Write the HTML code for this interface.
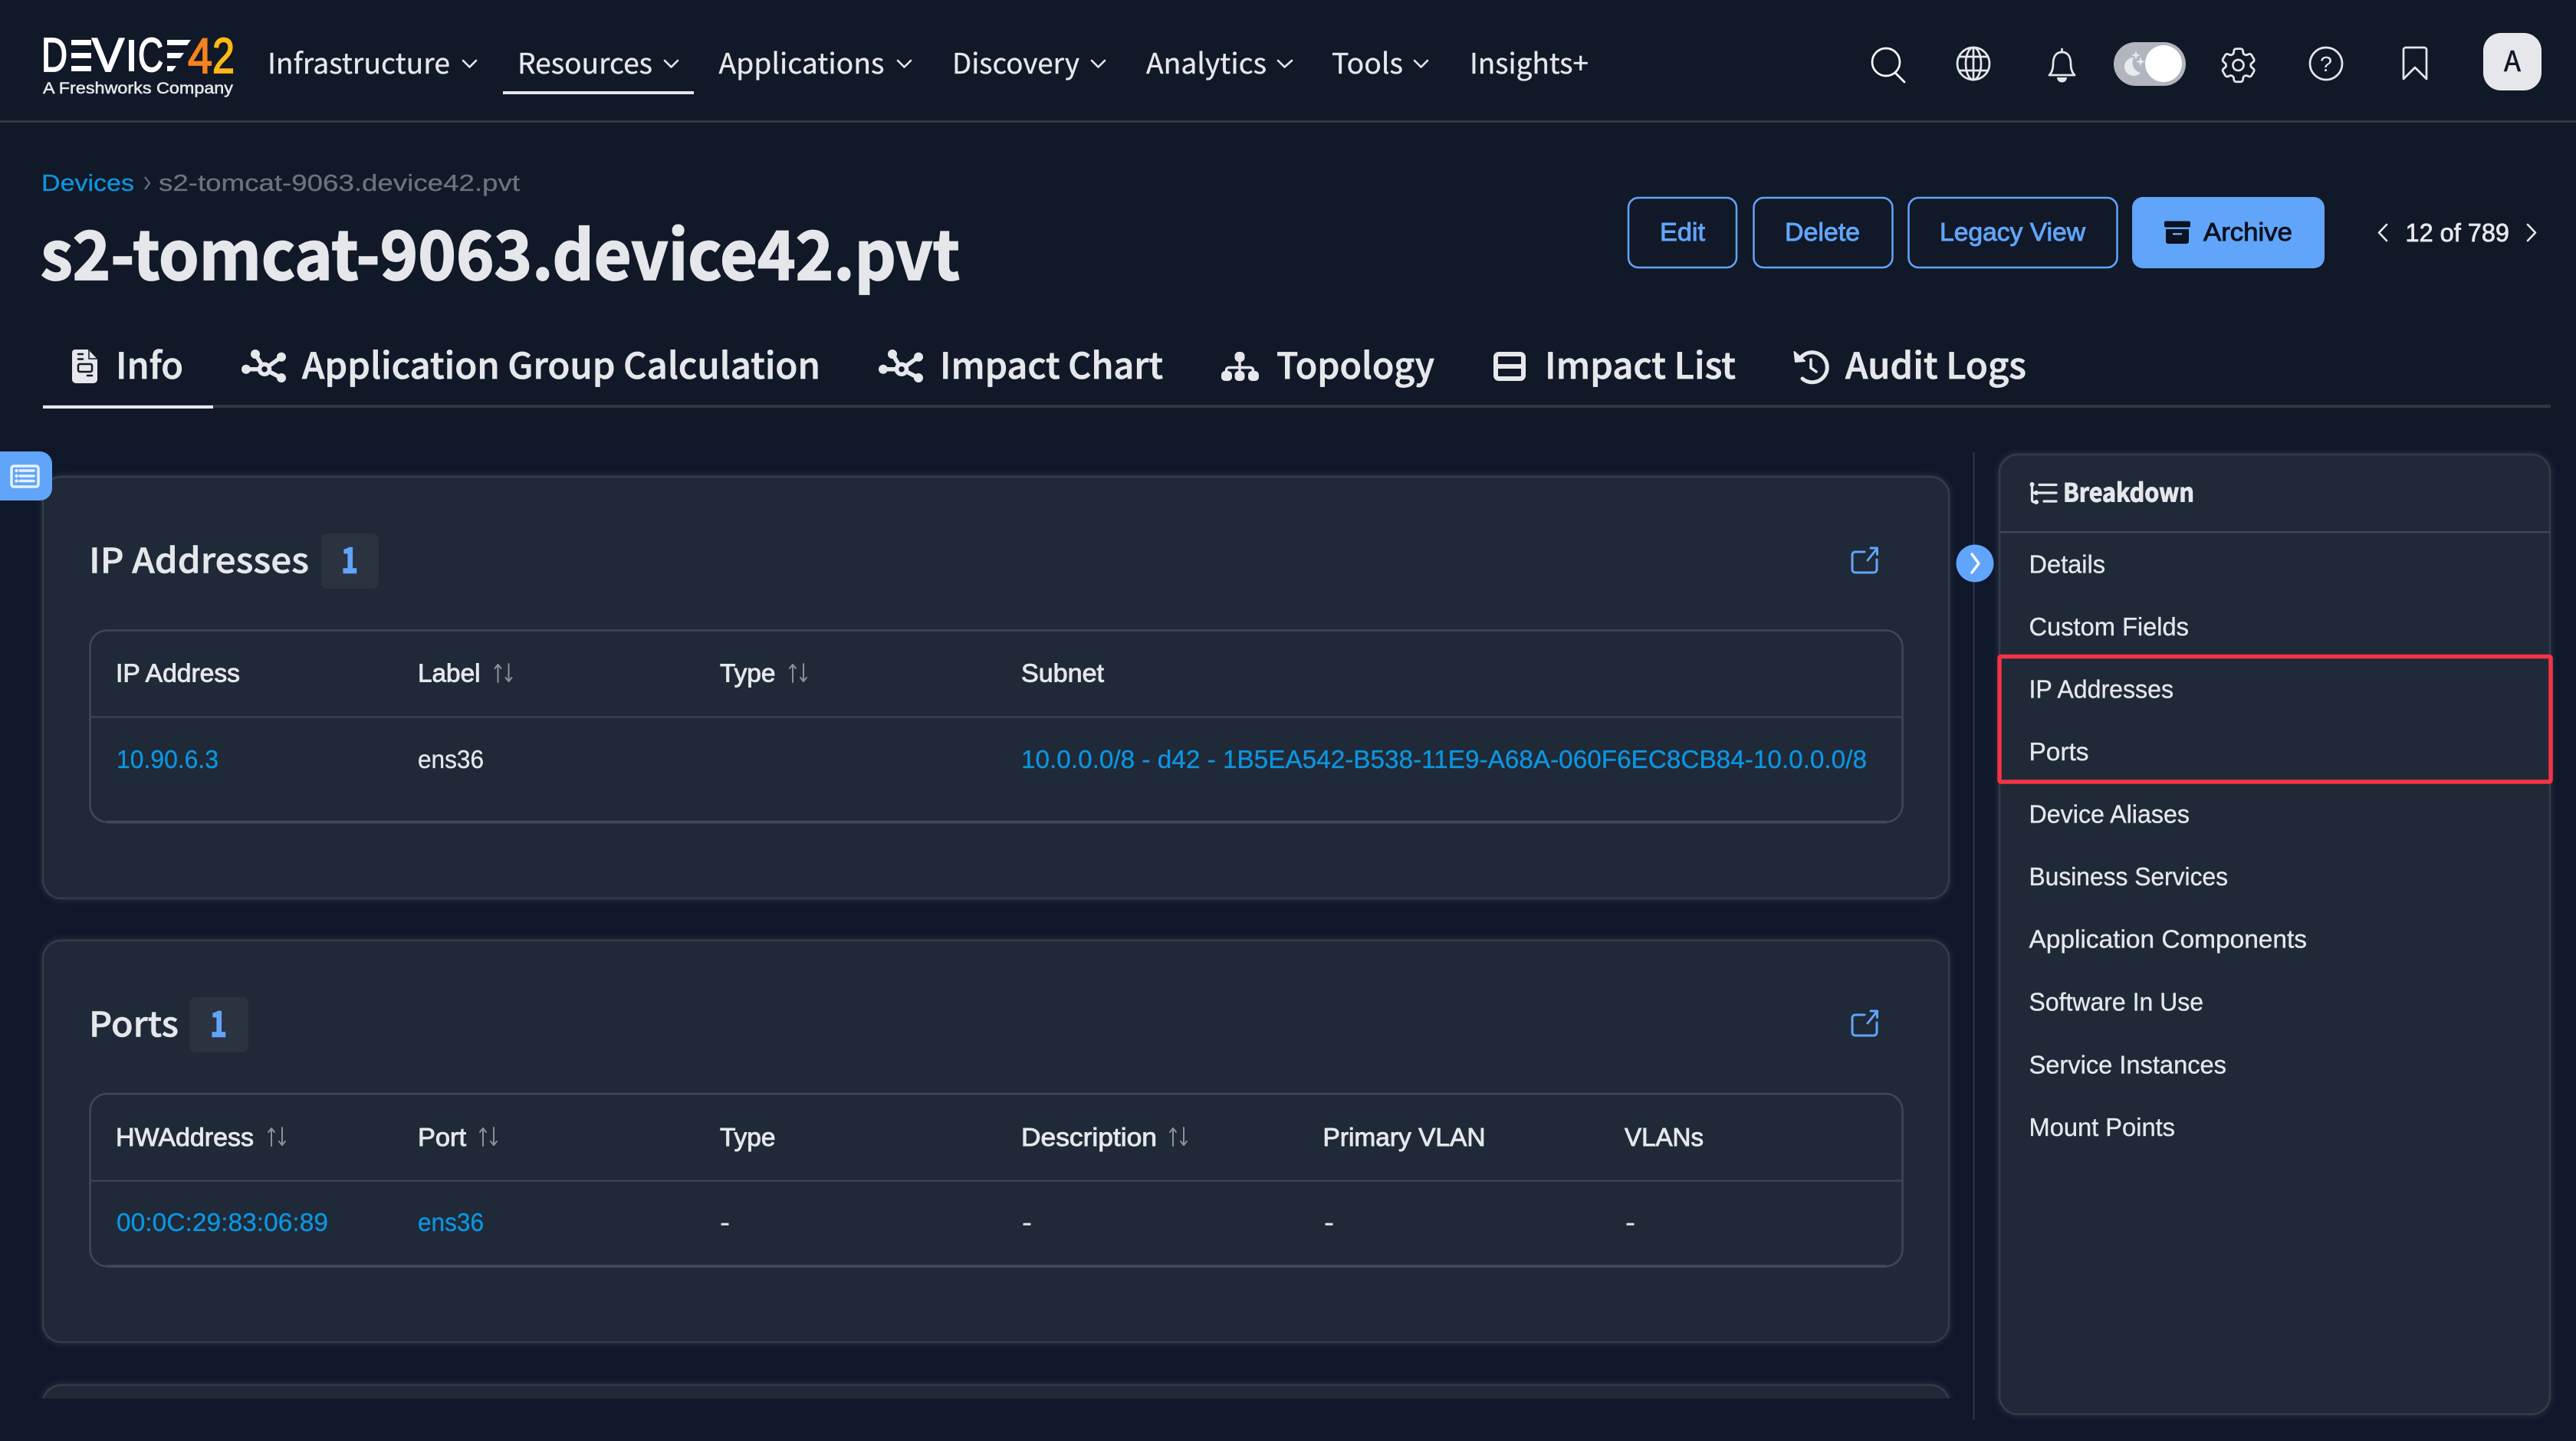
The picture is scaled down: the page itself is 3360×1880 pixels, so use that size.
<!DOCTYPE html>
<html lang="en"><head><meta charset="utf-8"><title>s2-tomcat-9063.device42.pvt</title>
<style>
html,body{margin:0;padding:0;width:3360px;height:1880px;overflow:hidden;background:#111827}
svg{display:block}
text{fill:#e5e7eb;white-space:pre}
.n{font-family:"Noto Sans CJK JP","Liberation Sans",sans-serif}
.l{font-family:"Liberation Sans","Noto Sans CJK JP",sans-serif}
.nav{font-size:37px;stroke:#e5e7eb;stroke-width:.35px}
.tab{font-size:47px;font-weight:500;stroke:#e5e7eb;stroke-width:.8px}
.th{font-size:33px;stroke:#e5e7eb;stroke-width:.9px}
.td{font-size:33px;stroke:#e5e7eb;stroke-width:.35px}
.a{fill:#0b95e0;stroke:#0b95e0;stroke-width:.35px}
.side{font-size:33px;stroke:#e5e7eb;stroke-width:.35px}
.btn{font-size:33px;fill:#60a5fa;stroke:#60a5fa;stroke-width:.9px}
.h{font-size:45px;font-weight:500;stroke:#e5e7eb;stroke-width:.6px}
.ic{fill:none;stroke:#e5e7eb;stroke-width:2.700;stroke-linecap:round;stroke-linejoin:round}
.ch{fill:none;stroke:#e5e7eb;stroke-width:2.600;stroke-linecap:round;stroke-linejoin:round}
.card{fill:#1f2937;stroke:#333c4b;stroke-width:2.500;filter:drop-shadow(0 0 5px rgba(255,255,255,.13))}
.tb{fill:none;stroke:#3f4856;stroke-width:2.500}
.sa{fill:none;stroke:#8b919b;stroke-width:2;stroke-linecap:round;stroke-linejoin:round}
.ext{fill:none;stroke:#60a5fa;stroke-width:3;stroke-linecap:round;stroke-linejoin:round}
</style></head>
<body>
<svg xmlns="http://www.w3.org/2000/svg" width="3360" height="1880" viewBox="0 0 3360 1880">
<defs>
<clipPath id="c3"><rect x="40" y="1790" width="2520" height="34.500"/></clipPath>
<linearGradient id="bg" x1="0" y1="0" x2="0" y2="1"><stop offset="0" stop-color="#111827"/><stop offset="1" stop-color="#0f172a"/></linearGradient>
<g id="sort"><path class="sa" d="M5 24V1M1 6l4-5 4 5M19 0v23M15 18l4 5 4-5"/></g>
</defs>
<rect width="3360" height="1880" fill="#111827"/>
<rect y="540" width="3360" height="70" fill="url(#bg)"/>
<rect y="610" width="3360" height="1270" fill="#0f172a"/>

<!-- header -->
<rect y="157" width="3360" height="3" fill="#2f3644"/>
<!-- logo -->
<g class="l" font-size="62" stroke-width="1.800">
<text x="54" y="93" textLength="34" lengthAdjust="spacingAndGlyphs" stroke="#fff" style="fill:#fff">D</text>
<rect x="93" y="52" width="26" height="7" fill="#fff"/><rect x="93" y="69" width="26" height="7" fill="#fff"/><rect x="93" y="86" width="26" height="7" fill="#fff"/>
<text x="120" y="93" textLength="42" lengthAdjust="spacingAndGlyphs" stroke="#fff" style="fill:#fff">V</text>
<rect x="168" y="52" width="7" height="41" fill="#fff"/>
<text x="180" y="93" textLength="33" lengthAdjust="spacingAndGlyphs" stroke="#fff" style="fill:#fff">C</text>
<path d="M218 52h31l-5 7h-26zM218 69h22l-5 7h-17zM218 86h12l-5 7h-7z" fill="#fff"/>
<text x="245" y="95" font-size="65" textLength="32" lengthAdjust="spacingAndGlyphs" stroke="#f58220" style="fill:#f58220">4</text>
<text x="277" y="95" font-size="65" textLength="29" lengthAdjust="spacingAndGlyphs" stroke="#fdb913" style="fill:#fdb913">2</text>
</g>
<text class="l" x="56" y="122" font-size="21" textLength="248" lengthAdjust="spacingAndGlyphs" stroke="#e5e7eb" stroke-width=".5">A Freshworks Company</text>

<!-- nav -->
<g class="n nav">
<text x="349" y="96" textLength="238" lengthAdjust="spacingAndGlyphs">Infrastructure</text>
<text x="675" y="96" textLength="176" lengthAdjust="spacingAndGlyphs">Resources</text>
<text x="937.500" y="96" textLength="216" lengthAdjust="spacingAndGlyphs">Applications</text>
<text x="1242" y="96" textLength="166" lengthAdjust="spacingAndGlyphs">Discovery</text>
<text x="1495" y="96" textLength="157" lengthAdjust="spacingAndGlyphs">Analytics</text>
<text x="1737" y="96" textLength="93" lengthAdjust="spacingAndGlyphs">Tools</text>
<text x="1917" y="96" textLength="155" lengthAdjust="spacingAndGlyphs">Insights+</text>
</g>
<path class="ch" d="M604 79l8.500 8.500L621 79M867 79l8.500 8.500L884 79M1171 79l8.500 8.500L1188 79M1424 79l8.500 8.500L1441 79M1667 79l8.500 8.500L1685 79M1845 79l8.500 8.500L1862 79"/>
<rect x="656" y="119" width="249" height="4" fill="#e5e7eb"/>

<!-- top right icons -->
<g class="ic">
<circle cx="2460" cy="81" r="18" stroke="#fff"/><path d="M2472 95l12 12" stroke="#fff"/>
<circle cx="2574" cy="83" r="21"/><ellipse cx="2574" cy="83" rx="10" ry="21"/><path d="M2574 62v42M2556 74h36M2556 92h36"/>
<path d="M2673 98c4-4 5-9 5-15c0-9 4-15 11.500-15s11.500 6 11.500 15c0 6 1 11 5 15z"/><path d="M2689.500 64v4"/>
<path transform="translate(2891 56.500) scale(2.390)" stroke-width="1.150" d="M9.594 3.940c.09-.542.56-.94 1.110-.94h2.593c.55 0 1.020.398 1.110.94l.213 1.281c.063.374.313.686.645.87.074.04.147.083.22.127.325.196.72.257 1.075.124l1.217-.456a1.125 1.125 0 011.370.49l1.296 2.247a1.125 1.125 0 01-.26 1.431l-1.003.827c-.293.24-.438.613-.431.992a6.759 6.759 0 010 .255c-.007.378.138.75.43.99l1.005.828c.424.35.534.954.26 1.430l-1.298 2.247a1.125 1.125 0 01-1.369.491l-1.217-.456c-.355-.133-.75-.072-1.076.124a6.570 6.570 0 01-.22.128c-.331.183-.581.495-.644.869l-.213 1.280c-.09.543-.56.941-1.110.941h-2.594c-.55 0-1.020-.398-1.110-.94l-.213-1.281c-.062-.374-.312-.686-.644-.87a6.520 6.520 0 01-.22-.127c-.325-.196-.72-.257-1.076-.124l-1.217.456a1.125 1.125 0 01-1.369-.49l-1.297-2.247a1.125 1.125 0 01.26-1.431l1.004-.827c.292-.24.437-.613.43-.992a6.932 6.932 0 010-.255c.007-.378-.138-.75-.43-.99l-1.004-.828a1.125 1.125 0 01-.26-1.430l1.297-2.247a1.125 1.125 0 011.370-.491l1.216.456c.356.133.751.072 1.076-.124.072-.044.146-.087.22-.128.332-.183.582-.495.644-.869l.214-1.281z"/>
<circle cx="2919.500" cy="85" r="7"/>
<circle cx="3034" cy="83" r="21"/>
<path d="M3135 103V65a3 3 0 0 1 3-3h24a3 3 0 0 1 3 3v38l-15-15z"/>
</g>
<path d="M2683 101h13a6.500 6.500 0 0 1-13 0z" fill="#e5e7eb"/>
<text class="l" x="3026" y="93" font-size="28" textLength="16" lengthAdjust="spacingAndGlyphs">?</text>
<rect x="2757" y="55" width="94" height="57" rx="28.500" fill="#b1b6be"/>
<path d="M2783 75a12 12 0 1 0 9 20a14 14 0 0 1-9-20z" fill="#e8eaee"/>
<path d="M2786 66l1.500 4.500 4.500 1.500-4.500 1.500-1.500 4.500-1.500-4.500-4.500-1.500 4.500-1.500zM2792 74l1.500 5 4.500 1.500-4.500 1.500-1.500 5-1.500-5-4.500-1.500 4.500-1.500z" fill="#e8eaee"/>
<circle cx="2822" cy="83" r="24" fill="#fff"/>
<rect x="3239" y="43" width="76" height="75" rx="23" fill="#e5e7eb"/>
<text class="n" x="3266" y="93" font-size="37" textLength="22" lengthAdjust="spacingAndGlyphs" stroke="#111827" stroke-width=".6" style="fill:#111827">A</text>

<!-- breadcrumb + title -->
<text class="l" x="54" y="249" font-size="31" textLength="121" lengthAdjust="spacingAndGlyphs" stroke="#0b95e0" stroke-width=".3" style="fill:#0b95e0">Devices</text>
<path d="M189 231l6 8-6 8" fill="none" stroke="#6b7280" stroke-width="2.200"/>
<text class="l" x="207" y="249" font-size="31" textLength="471" lengthAdjust="spacingAndGlyphs" stroke="#6b7280" stroke-width=".3" style="fill:#6b7280">s2-tomcat-9063.device42.pvt</text>
<text class="n" x="53" y="365" font-size="88" font-weight="700" textLength="1199" lengthAdjust="spacingAndGlyphs" stroke="#e5e7eb" stroke-width="1.800">s2-tomcat-9063.device42.pvt</text>

<!-- buttons -->
<g fill="none" stroke="#60a5fa" stroke-width="2.500">
<rect x="2124" y="258" width="141" height="91" rx="13"/>
<rect x="2287.500" y="258" width="181" height="91" rx="13"/>
<rect x="2489.500" y="258" width="272" height="91" rx="13"/>
</g>
<g class="l">
<text class="btn" x="2165" y="314" textLength="59" lengthAdjust="spacingAndGlyphs">Edit</text>
<text class="btn" x="2328" y="314" textLength="98" lengthAdjust="spacingAndGlyphs">Delete</text>
<text class="btn" x="2530" y="314" textLength="190" lengthAdjust="spacingAndGlyphs">Legacy View</text>
</g>
<rect x="2781" y="257" width="251" height="93" rx="14" fill="#60a5fa"/>
<path d="M2825 288.500h30a2 2 0 0 1 2 2v4a2 2 0 0 1-2 2h-30a2 2 0 0 1-2-2v-4a2 2 0 0 1 2-2zM2825 299h30v16a3 3 0 0 1-3 3h-24a3 3 0 0 1-3-3zM2834 304v2.500h12V304z" fill="#0b1220" fill-rule="evenodd"/>
<text class="l" x="2874" y="314" font-size="33" textLength="116" lengthAdjust="spacingAndGlyphs" stroke="#0b1220" stroke-width=".9" style="fill:#0b1220">Archive</text>
<path class="ch" d="M3113 293l-10 10.500 10 10.500M3297 293l10 10.500-10 10.500"/>
<text class="l" x="3137.500" y="315" font-size="33" textLength="135.500" lengthAdjust="spacingAndGlyphs" stroke="#e5e7eb" stroke-width=".8">12 of 789</text>

<!-- tabs -->
<rect x="56" y="528" width="3271" height="4" fill="#2f3644"/>
<rect x="56" y="529" width="222" height="4" fill="#e5e7eb"/>
<g class="n tab">
<text x="151" y="494" textLength="88" lengthAdjust="spacingAndGlyphs">Info</text>
<text x="394" y="494" textLength="676" lengthAdjust="spacingAndGlyphs">Application Group Calculation</text>
<text x="1226" y="494" textLength="291" lengthAdjust="spacingAndGlyphs">Impact Chart</text>
<text x="1665" y="494" textLength="206" lengthAdjust="spacingAndGlyphs">Topology</text>
<text x="2015" y="494" textLength="249" lengthAdjust="spacingAndGlyphs">Impact List</text>
<text x="2407" y="494" textLength="236" lengthAdjust="spacingAndGlyphs">Audit Logs</text>
</g>
<!-- info doc icon -->
<path d="M98 456h17l12 12.500V495a5 5 0 0 1-5 5H99a5 5 0 0 1-5-5v-35a4 4 0 0 1 4-4z" fill="#e5e7eb"/>
<path d="M102 462h6M102 468.500h6M114 490h6" stroke="#111827" stroke-width="2.500" stroke-linecap="round"/>
<rect x="102" y="475" width="18" height="10" rx="2" fill="none" stroke="#111827" stroke-width="2.500"/>
<path d="M116 456v12h11" fill="none" stroke="#111827" stroke-width="1.500"/>
<!-- app group icons -->
<g>
<path d="M333 462l12 19.700M321 481.700h24M367 465.700l-22 16M367 493l-22-11.300" stroke="#e5e7eb" stroke-width="5.500" fill="none"/>
<circle cx="333" cy="462" r="6" fill="#e5e7eb"/><circle cx="321" cy="481.700" r="6" fill="#e5e7eb"/><circle cx="367" cy="465.700" r="6" fill="#e5e7eb"/><circle cx="367" cy="493" r="6" fill="#e5e7eb"/>
<circle cx="345" cy="481.700" r="6.500" fill="#111827" stroke="#e5e7eb" stroke-width="5.500"/>
</g>
<g transform="translate(831 0)">
<path d="M333 462l12 19.700M321 481.700h24M367 465.700l-22 16M367 493l-22-11.300" stroke="#e5e7eb" stroke-width="5.500" fill="none"/>
<circle cx="333" cy="462" r="6" fill="#e5e7eb"/><circle cx="321" cy="481.700" r="6" fill="#e5e7eb"/><circle cx="367" cy="465.700" r="6" fill="#e5e7eb"/><circle cx="367" cy="493" r="6" fill="#e5e7eb"/>
<circle cx="345" cy="481.700" r="6.500" fill="#111827" stroke="#e5e7eb" stroke-width="5.500"/>
</g>
<!-- topology -->
<path d="M1617 470v10M1599.500 486v-3a3.500 3.500 0 0 1 3.500-3.500h28a3.500 3.500 0 0 1 3.500 3.500v3M1617 480v6" stroke="#e5e7eb" stroke-width="3.500" fill="none"/>
<rect x="1610.500" y="459" width="13" height="13" rx="5.500" fill="#e5e7eb"/>
<rect x="1593" y="484" width="14" height="13" rx="5" fill="#e5e7eb"/><rect x="1610.500" y="484" width="13" height="13" rx="5" fill="#e5e7eb"/><rect x="1628" y="484" width="14" height="13" rx="5" fill="#e5e7eb"/>
<!-- impact list -->
<rect x="1951" y="462" width="36" height="32" rx="4" fill="none" stroke="#e5e7eb" stroke-width="6"/>
<path d="M1950 478h38" stroke="#e5e7eb" stroke-width="6"/>
<!-- audit -->
<path d="M2349 466.500A19.500 19.500 0 1 1 2351 494" fill="none" stroke="#e5e7eb" stroke-width="5" stroke-linecap="round"/>
<path d="M2340.500 459l1.500 13 12-1z" fill="#e5e7eb" stroke="#e5e7eb" stroke-width="2" stroke-linejoin="round"/>
<path d="M2362 469v11l7 5" fill="none" stroke="#e5e7eb" stroke-width="3.500" stroke-linecap="round"/>

<!-- divider -->
<rect x="2573.500" y="590" width="2" height="1263" fill="#2f3644"/>

<!-- card 1 -->
<rect class="card" x="56" y="622" width="2486" height="550" rx="24"/>
<text class="n h" x="116" y="747.500" textLength="287" lengthAdjust="spacingAndGlyphs">IP Addresses</text>
<rect x="419" y="696" width="75" height="72" rx="8" fill="#2b3240"/>
<text class="n" x="445" y="747.500" font-size="46" font-weight="700" textLength="22" lengthAdjust="spacingAndGlyphs" stroke="#60a5fa" stroke-width="1.500" style="fill:#60a5fa">1</text>
<path class="ext" d="M2432 720h-12a4 4 0 0 0-4 4v19a4 4 0 0 0 4 4h24a4 4 0 0 0 4-4v-13M2436 731l12-15M2440 715h8.500v8.500"/>
<rect class="tb" x="117.500" y="822.500" width="2364" height="250" rx="22"/>
<path d="M140 1072.500h2320" stroke="#3f4856" stroke-width="4"/>
<rect x="118" y="934.500" width="2363" height="2" fill="#3f4856"/>
<g class="l th">
<text x="151" y="889.500" textLength="162" lengthAdjust="spacingAndGlyphs">IP Address</text>
<text x="545" y="889.500" textLength="81.500" lengthAdjust="spacingAndGlyphs">Label</text>
<text x="939" y="889.500" textLength="72.500" lengthAdjust="spacingAndGlyphs">Type</text>
<text x="1332" y="889.500" textLength="108" lengthAdjust="spacingAndGlyphs">Subnet</text>
</g>
<use href="#sort" x="644.500" y="866"/><use href="#sort" x="1029" y="866"/>
<g class="l td">
<text class="a" x="152" y="1002" textLength="133" lengthAdjust="spacingAndGlyphs">10.90.6.3</text>
<text x="545" y="1002" textLength="86" lengthAdjust="spacingAndGlyphs">ens36</text>
<text class="a" x="1332" y="1002" textLength="1103" lengthAdjust="spacingAndGlyphs">10.0.0.0/8 - d42 - 1B5EA542-B538-11E9-A68A-060F6EC8CB84-10.0.0.0/8</text>
</g>

<!-- card 2 -->
<rect class="card" x="56" y="1227" width="2486" height="524" rx="24"/>
<text class="n h" x="116" y="1352.500" textLength="117" lengthAdjust="spacingAndGlyphs">Ports</text>
<rect x="247" y="1301" width="77" height="72" rx="8" fill="#2b3240"/>
<text class="n" x="274" y="1352.500" font-size="46" font-weight="700" textLength="22" lengthAdjust="spacingAndGlyphs" stroke="#60a5fa" stroke-width="1.500" style="fill:#60a5fa">1</text>
<g transform="translate(0 604)"><path class="ext" d="M2432 720h-12a4 4 0 0 0-4 4v19a4 4 0 0 0 4 4h24a4 4 0 0 0 4-4v-13M2436 731l12-15M2440 715h8.500v8.500"/></g>
<rect class="tb" x="117.500" y="1427" width="2364" height="225" rx="22"/>
<path d="M140 1652h2320" stroke="#3f4856" stroke-width="4"/>
<rect x="118" y="1539.500" width="2363" height="2" fill="#3f4856"/>
<g class="l th">
<text x="151" y="1495" textLength="180" lengthAdjust="spacingAndGlyphs">HWAddress</text>
<text x="545" y="1495" textLength="63" lengthAdjust="spacingAndGlyphs">Port</text>
<text x="939" y="1495" textLength="72.500" lengthAdjust="spacingAndGlyphs">Type</text>
<text x="1332" y="1495" textLength="177" lengthAdjust="spacingAndGlyphs">Description</text>
<text x="1725.500" y="1495" textLength="212" lengthAdjust="spacingAndGlyphs">Primary VLAN</text>
<text x="2119" y="1495" textLength="103" lengthAdjust="spacingAndGlyphs">VLANs</text>
</g>
<use href="#sort" x="349" y="1471"/><use href="#sort" x="625" y="1471"/><use href="#sort" x="1525" y="1471"/>
<g class="l td">
<text class="a" x="152" y="1606" textLength="276" lengthAdjust="spacingAndGlyphs">00:0C:29:83:06:89</text>
<text class="a" x="545" y="1606" textLength="86" lengthAdjust="spacingAndGlyphs">ens36</text>
<text x="939" y="1606" textLength="13" lengthAdjust="spacingAndGlyphs">-</text>
<text x="1333" y="1606" textLength="13" lengthAdjust="spacingAndGlyphs">-</text>
<text x="1727" y="1606" textLength="13" lengthAdjust="spacingAndGlyphs">-</text>
<text x="2120" y="1606" textLength="13" lengthAdjust="spacingAndGlyphs">-</text>
</g>

<!-- card 3 -->
<g clip-path="url(#c3)"><rect class="card" x="56" y="1807" width="2486" height="50" rx="24"/></g>

<!-- sticker -->
<path d="M0 589h52a16 16 0 0 1 16 16v32a16 16 0 0 1-16 16H0z" fill="#60a5fa"/>
<rect x="15" y="608" width="35" height="27" rx="3" fill="none" stroke="#e8f1fe" stroke-width="3.500"/>
<path d="M26 614h18M26 621h18M26 627.500h18" stroke="#e8f1fe" stroke-width="3.500" stroke-linecap="round"/>
<circle cx="21.500" cy="614" r="2.200" fill="#e8f1fe"/><circle cx="21.500" cy="621" r="2.200" fill="#e8f1fe"/><circle cx="21.500" cy="627.500" r="2.200" fill="#e8f1fe"/>

<!-- collapse circle -->
<circle cx="2576" cy="735" r="24.500" fill="#60a5fa"/>
<path d="M2572 723l9 12-9 12" fill="none" stroke="#fff" stroke-width="3.500" stroke-linecap="round" stroke-linejoin="round"/>

<!-- sidebar -->
<rect class="card" x="2608" y="593" width="718" height="1252" rx="24"/>
<rect x="2609" y="693" width="716" height="2.500" fill="#3f4856"/>
<path d="M2650.500 633v19.500a2.500 2.500 0 0 0 2.500 2.500M2650.500 643h4M2660 632.500h22M2660 643h22M2666 654h16" fill="none" stroke="#e5e7eb" stroke-width="3.200" stroke-linecap="round"/>
<circle cx="2650.500" cy="632" r="3" fill="#e5e7eb"/><circle cx="2656" cy="643" r="3" fill="#e5e7eb"/><circle cx="2656" cy="655" r="3" fill="#e5e7eb"/>
<text class="n" x="2691" y="654.500" font-size="33" font-weight="700" textLength="171" lengthAdjust="spacingAndGlyphs" stroke="#e5e7eb" stroke-width="1">Breakdown</text>
<g class="l side">
<text x="2646.500" y="747.500" textLength="99.500" lengthAdjust="spacingAndGlyphs">Details</text>
<text x="2646.500" y="829" textLength="208.500" lengthAdjust="spacingAndGlyphs">Custom Fields</text>
<text x="2646.500" y="910.500" textLength="188.500" lengthAdjust="spacingAndGlyphs">IP Addresses</text>
<text x="2646.500" y="992" textLength="78" lengthAdjust="spacingAndGlyphs">Ports</text>
<text x="2646.500" y="1073.500" textLength="209.500" lengthAdjust="spacingAndGlyphs">Device Aliases</text>
<text x="2646.500" y="1155" textLength="259.500" lengthAdjust="spacingAndGlyphs">Business Services</text>
<text x="2646.500" y="1236.500" textLength="362.500" lengthAdjust="spacingAndGlyphs">Application Components</text>
<text x="2646.500" y="1318.500" textLength="227.500" lengthAdjust="spacingAndGlyphs">Software In Use</text>
<text x="2646.500" y="1400.500" textLength="257.500" lengthAdjust="spacingAndGlyphs">Service Instances</text>
<text x="2646.500" y="1482" textLength="190.500" lengthAdjust="spacingAndGlyphs">Mount Points</text>
</g>
<rect x="2608" y="856.500" width="719" height="163.500" rx="2" fill="none" stroke="#f43344" stroke-width="5.500"/>
</svg>
</body></html>
